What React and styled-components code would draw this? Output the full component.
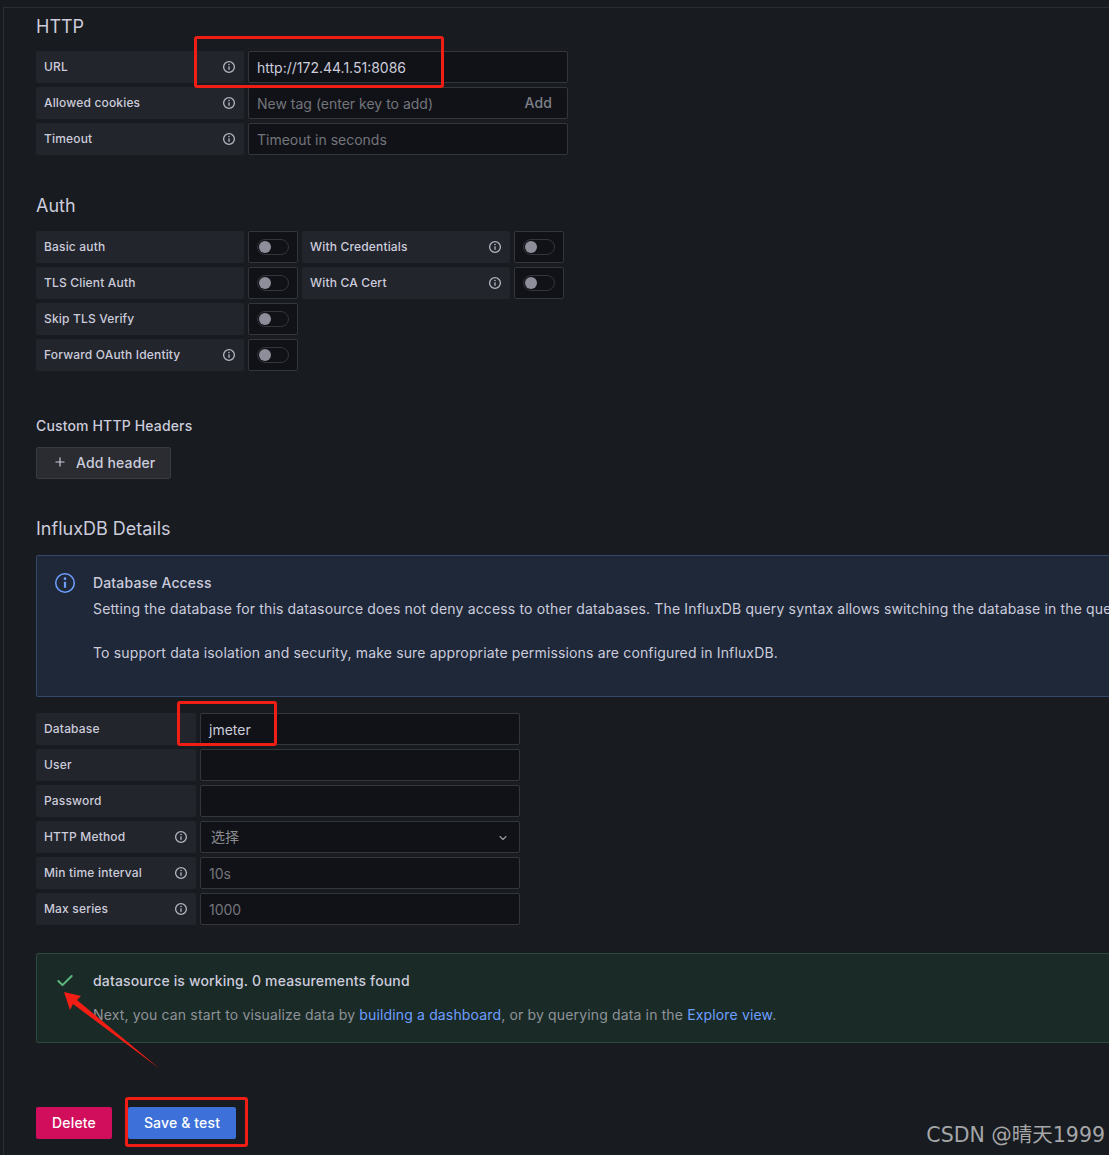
import React from "react";
import styled, { createGlobalStyle } from "styled-components";
import { Plus, ChevronDown, Check } from "lucide-react";

const Global = createGlobalStyle`
  html, body { margin: 0; padding: 0; background: #181b1f; }
  body { font-family: Inter, "Noto Sans CJK SC", sans-serif; letter-spacing: 0.15px; }
`;

const Page = styled.div`
  position: relative;
  width: 1109px;
  height: 1155px;
  overflow: hidden;
  background: #181b1f;
  color: #ccccdc;
  box-sizing: border-box;
  padding-top: 7px;
`;
const Frame = styled.div`
  height: 1148px;
  margin-left: 3px;
  border-top: 1px solid #2a2d33;
  border-left: 1px solid #2a2d33;
  padding-left: 32px;
  box-sizing: border-box;
`;
const Title = styled.h3`
  margin: 0;
  font-size: 18px;
  font-weight: 400;
  letter-spacing: 0;
  line-height: 22px;
  color: #ccccdc;
  padding-top: ${(p) => p.$top}px;
  padding-bottom: ${(p) => p.$bottom}px;
`;
const SubTitle = styled.h4`
  margin: 0;
  font-size: 14px;
  font-weight: 500;
  letter-spacing: 0.15px;
  line-height: 20px;
  padding-top: 45px;
  padding-bottom: 11px;
`;
const Rows = styled.div`
  display: flex;
  flex-direction: column;
  gap: 4px;
`;
const Row = styled.div`
  display: flex;
  gap: 4px;
  height: 32px;
`;
const Label = styled.div`
  width: ${(p) => p.$w}px;
  box-sizing: border-box;
  background: #22252b;
  border-radius: 2px;
  padding: 0 8px;
  display: flex;
  align-items: center;
  justify-content: space-between;
  font-size: 12px;
  font-weight: 500;
  letter-spacing: 0.17px;
  color: #ccccdc;
`;
const LabelText = styled.span`
  margin-top: -2px;
`;
const Field = styled.div`
  width: ${(p) => p.$w}px;
  box-sizing: border-box;
  background: #111217;
  border: 1px solid #34363c;
  border-radius: 2px;
  padding: 1px 8px 0;
  display: flex;
  align-items: center;
  justify-content: space-between;
  font-size: 14px;
  letter-spacing: 0;
  color: ${(p) => (p.$value ? "#ccccdc" : "#73757c")};
`;
const AddText = styled.span`
  color: #7e8087;
  font-weight: 500;
  letter-spacing: 0.15px;
  margin-right: 7px;
  margin-top: -2px;
`;
const SelectText = styled.span`
  color: #8a8b90;
  padding-left: 2px;
  margin-top: -4px;
`;
const Chevron = styled(ChevronDown)`
  margin-right: 2px;
`;
const SwitchBox = styled.div`
  width: 50px;
  box-sizing: border-box;
  background: #111217;
  border: 1px solid #34363c;
  border-radius: 2px;
  display: flex;
  align-items: center;
  justify-content: center;
`;
const Track = styled.div`
  width: 32px;
  height: 16px;
  box-sizing: border-box;
  border: 1px solid #34363c;
  border-radius: 8px;
  background: #111217;
  display: flex;
  align-items: center;
  padding-left: 1px;
`;
const Knob = styled.div`
  width: 12px;
  height: 12px;
  border-radius: 50%;
  background: #8e8e9a;
`;
const AddHeader = styled.button`
  width: 135px;
  height: 32px;
  display: flex;
  align-items: center;
  gap: 9px;
  padding: 0 0 2px 16px;
  background: #2a2c31;
  color: #ccccdc;
  border: 1px solid #393b40;
  border-radius: 2px;
  font: 500 14px Inter, sans-serif;
  letter-spacing: 0.15px;
`;
const Alert = styled.div`
  width: 1240px;
  height: ${(p) => p.$h}px;
  box-sizing: border-box;
  margin-top: ${(p) => p.$mt || 0}px;
  margin-bottom: ${(p) => p.$mb}px;
  display: flex;
  background: ${(p) => p.$bg};
  border: 1px solid ${(p) => p.$border};
  border-radius: 2px;
`;
const AlertIcon = styled.div`
  width: 56px;
  flex: none;
  padding-top: ${(p) => p.$top}px;
  display: flex;
  justify-content: center;
`;
const AlertBody = styled.div`
  padding-top: ${(p) => p.$top}px;
  font-size: 14px;
  line-height: 22px;
  white-space: nowrap;
`;
const AlertTitle = styled.div`
  font-weight: 500;
  margin-bottom: ${(p) => p.$mb}px;
`;
const AlertText = styled.div`
  color: ${(p) => p.$c || "#ccccdc"};
`;
const Spacer = styled.div`
  height: 22px;
`;
const Link = styled.a`
  color: #6e9fff;
`;
const Actions = styled.div`
  display: flex;
  gap: 16px;
`;
const Btn = styled.button`
  width: ${(p) => p.$w}px;
  height: 32px;
  border: none;
  border-radius: 2px;
  background: ${(p) => p.$bg};
  color: #fff;
  font: 500 14px Inter, sans-serif;
  letter-spacing: 0.15px;
  padding: 0 0 2px;
`;
const RedBox = styled.div`
  position: absolute;
  left: ${(p) => p.$l}px;
  top: ${(p) => p.$t}px;
  width: ${(p) => p.$w}px;
  height: ${(p) => p.$h}px;
  box-sizing: border-box;
  border: 3px solid #f01e14;
  border-radius: 3px;
`;
const ArrowSvg = styled.svg`
  position: absolute;
  left: 60px;
  top: 988px;
`;
const Watermark = styled.div`
  position: absolute;
  right: 4px;
  top: 1122px;
  font: 400 20.5px/26px "DejaVu Sans", "Noto Sans CJK SC", sans-serif;
  letter-spacing: 0;
  color: #a5a6a8;
  white-space: nowrap;
`;

const Info = ({ size = 14, color = "#b5b5c2", sw = 1.3 }) => (
  <svg width={size} height={size} viewBox="0 0 14 14" fill="none">
    <circle cx="7" cy="7" r="5.4" stroke={color} strokeWidth={sw} />
    <rect x="6.35" y="6.3" width="1.3" height="3.5" fill={color} />
    <circle cx="7" cy="4.5" r="0.8" fill={color} />
  </svg>
);

const Switch = () => (
  <SwitchBox>
    <Track>
      <Knob />
    </Track>
  </SwitchBox>
);

const LabelCell = ({ w = 208, info, children }) => (
  <Label $w={w}>
    <LabelText>{children}</LabelText>
    {info && <Info />}
  </Label>
);

export default function App() {
  return (
    <Page>
      <Global />
      <Frame>
        <Title $top={8} $bottom={13}>HTTP</Title>
        <Rows>
          <Row>
            <LabelCell info>URL</LabelCell>
            <Field $w={320} $value>http://172.44.1.51:8086</Field>
          </Row>
          <Row>
            <LabelCell info>Allowed cookies</LabelCell>
            <Field $w={320}>
              New tag (enter key to add)
              <AddText>Add</AddText>
            </Field>
          </Row>
          <Row>
            <LabelCell info>Timeout</LabelCell>
            <Field $w={320}>Timeout in seconds</Field>
          </Row>
        </Rows>
        <Title $top={40} $bottom={14}>Auth</Title>
        <Rows>
          <Row>
            <LabelCell>Basic auth</LabelCell>
            <Switch />
            <LabelCell info>With Credentials</LabelCell>
            <Switch />
          </Row>
          <Row>
            <LabelCell>TLS Client Auth</LabelCell>
            <Switch />
            <LabelCell info>With CA Cert</LabelCell>
            <Switch />
          </Row>
          <Row>
            <LabelCell>Skip TLS Verify</LabelCell>
            <Switch />
          </Row>
          <Row>
            <LabelCell info>Forward OAuth Identity</LabelCell>
            <Switch />
          </Row>
        </Rows>
        <SubTitle>Custom HTTP Headers</SubTitle>
        <AddHeader>
          <Plus size={14} color="#ccccdc" strokeWidth={2} />
          Add header
        </AddHeader>
        <Title $top={39} $bottom={15}>InfluxDB Details</Title>
        <Alert $h={142} $mb={16} $bg="#1e2839" $border="#33476a">
          <AlertIcon $top={15}>
            <Info size={24} color="#6e9fff" sw={0.9} />
          </AlertIcon>
          <AlertBody $top={16}>
            <AlertTitle $mb={4}>Database Access</AlertTitle>
            <AlertText>
              Setting the database for this datasource does not deny access to other databases. The InfluxDB query syntax allows switching the database in the query.
            </AlertText>
            <Spacer />
            <AlertText>
              To support data isolation and security, make sure appropriate permissions are configured in InfluxDB.
            </AlertText>
          </AlertBody>
        </Alert>
        <Rows>
          <Row>
            <LabelCell w={160}>Database</LabelCell>
            <Field $w={320} $value>jmeter</Field>
          </Row>
          <Row>
            <LabelCell w={160}>User</LabelCell>
            <Field $w={320} />
          </Row>
          <Row>
            <LabelCell w={160}>Password</LabelCell>
            <Field $w={320} />
          </Row>
          <Row>
            <LabelCell w={160} info>HTTP Method</LabelCell>
            <Field $w={320}>
              <SelectText>选择</SelectText>
              <Chevron size={12} color="#9a9ba3" strokeWidth={2.2} />
            </Field>
          </Row>
          <Row>
            <LabelCell w={160} info>Min time interval</LabelCell>
            <Field $w={320}>10s</Field>
          </Row>
          <Row>
            <LabelCell w={160} info>Max series</LabelCell>
            <Field $w={320}>1000</Field>
          </Row>
        </Rows>
        <Alert $h={90} $mt={28} $mb={64} $bg="#1a2a27" $border="#2d4a3c">
          <AlertIcon $top={17}>
            <Check size={20} color="#5cba7d" strokeWidth={2.4} />
          </AlertIcon>
          <AlertBody $top={16}>
            <AlertTitle $mb={12}>datasource is working. 0 measurements found</AlertTitle>
            <AlertText $c="#8f9298">
              Next, you can start to visualize data by <Link>building a dashboard</Link>, or by querying data in the <Link>Explore view</Link>.
            </AlertText>
          </AlertBody>
        </Alert>
        <Actions>
          <Btn $w={76} $bg="#d10e5c">Delete</Btn>
          <Btn $w={108} $bg="#3d71d9">Save &amp; test</Btn>
        </Actions>
      </Frame>
      <RedBox $l={194} $t={36} $w={250} $h={52} />
      <RedBox $l={177} $t={701} $w={100} $h={45} />
      <RedBox $l={125} $t={1097} $w={123} $h={50} />
      <ArrowSvg width="104" height="84" viewBox="0 0 104 84">
        <polygon points="4,4 21,8 17,12 100,81 13,16 10,22" fill="#f01e14" />
      </ArrowSvg>
      <Watermark>CSDN @晴天1999</Watermark>
    </Page>
  );
}
